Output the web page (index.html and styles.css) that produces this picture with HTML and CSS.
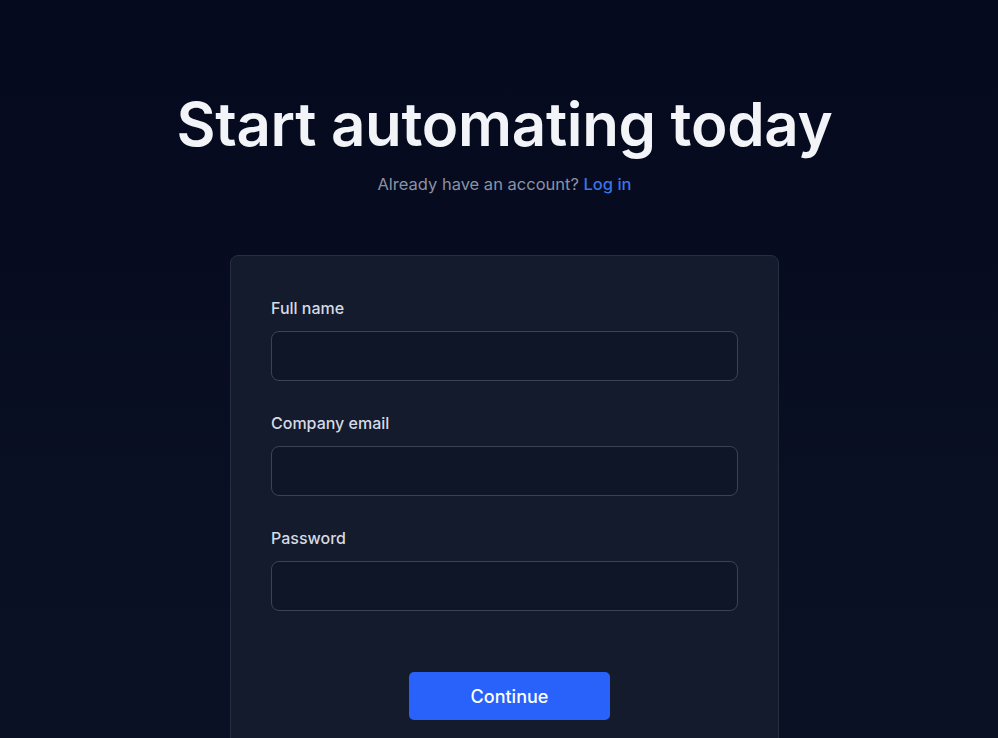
FILE: index.html
```html
<!DOCTYPE html>
<html>
<head>
    <title>Sign up</title>
    <link rel="stylesheet" href="styles.css">
</head>
<body>
    <div class="page">
        <header class="header">
            <h1>Start automating today</h1>
            <p class="sub">Already have an account? <a href="#" class="login">Log in</a></p>
        </header>
        <form class="card">
            <div class="form-group">
                <label for="full_name">Full name</label>
                <input type="text" id="full_name" name="full_name">
            </div>

            <div class="form-group">
                <label for="email">Company email</label>
                <input type="email" id="email" name="email">
            </div>

            <div class="form-group">
                <label for="password">Password</label>
                <input type="password" id="password" name="password">
            </div>

            <div class="actions">
                <button type="submit" class="btn">Continue</button>
            </div>
        </form>
    </div>
</body>
</html>
```

FILE: styles.css
```css
html, body {
    height: 100%;
}

body {
    font-family: 'Inter', 'Liberation Sans', sans-serif;
    background: linear-gradient(to bottom, #050a1e 0%, #060b20 30%, #0a1024 70%, #0b1125 100%);
    margin: 0;
    padding: 0;
    overflow: hidden;
}

.page {
    display: flex;
    flex-direction: column;
    align-items: center;
    padding-top: 88px;
    padding-left: 11px;
}

.header {
    text-align: center;
}

.header h1 {
    margin: 0;
    font-size: 60px;
    line-height: 72px;
    font-weight: 600;
    letter-spacing: -0.3px;
    color: #f2f4f8;
}

.sub {
    margin: 12px 0 0;
    font-size: 16.5px;
    line-height: 24px;
    color: #8a92a6;
}

.login {
    color: #3a74e8;
    font-weight: 500;
    text-decoration: none;
}

.card {
    margin-top: 59px;
    width: 549px;
    box-sizing: border-box;
    padding: 40px 40px 60px;
    background-color: #141b2d;
    border: 1px solid #262e40;
    border-radius: 8px;
    display: flex;
    flex-direction: column;
    gap: 30px;
}

.form-group label {
    display: block;
    font-size: 16px;
    line-height: 24px;
    font-weight: 500;
    color: #d6dae3;
    margin-bottom: 11px;
}

.form-group input {
    display: block;
    width: 100%;
    box-sizing: border-box;
    height: 50px;
    padding: 0 14px;
    font-size: 16px;
    font-family: inherit;
    color: #e6e9ef;
    background-color: #0f1628;
    border: 1px solid #3a4356;
    border-radius: 8px;
    outline: none;
}

.actions {
    display: flex;
    justify-content: center;
    padding-top: 31px;
    padding-left: 10px;
}

.btn {
    width: 201px;
    height: 48px;
    font-family: inherit;
    font-size: 18px;
    font-weight: 500;
    color: #fff;
    background-color: #2962fb;
    border: none;
    border-radius: 5px;
    cursor: pointer;
}
```
